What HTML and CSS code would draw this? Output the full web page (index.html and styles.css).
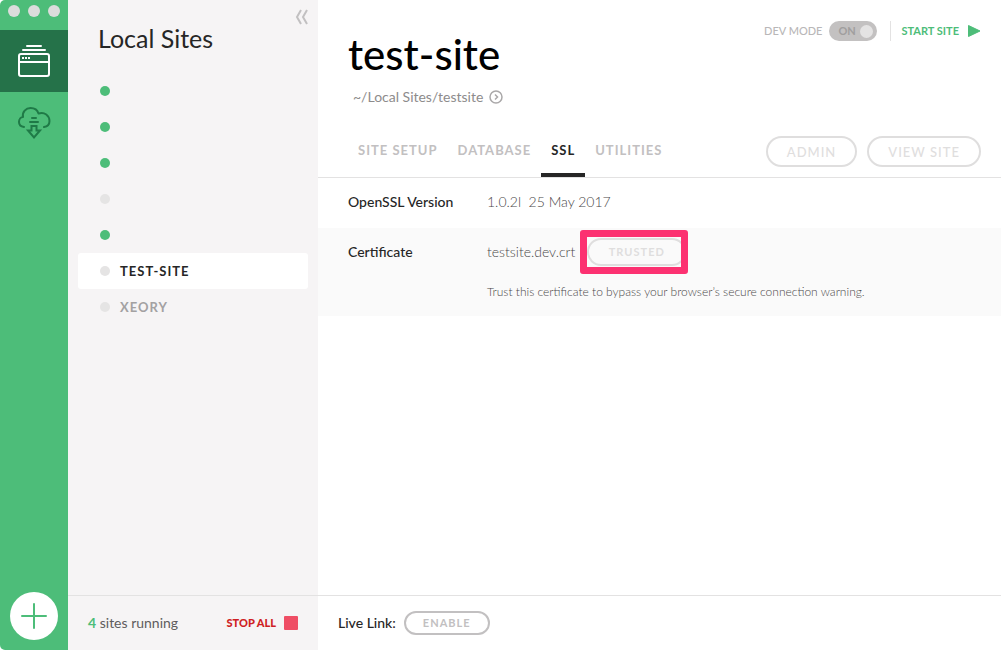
FILE: index.html
```html
<!DOCTYPE html>
<html lang="en">
<head>
<meta charset="utf-8">
<title>Local Sites</title>
<link rel="stylesheet" href="styles.css">
</head>
<body>
<div class="app">
  <nav class="rail" aria-label="Main">
    <div class="window-controls"><span class="light"></span><span class="light"></span><span class="light"></span></div>
    <button class="rail-item rail-item-active" aria-label="Local sites">
      <svg width="34" height="34" viewBox="0 0 34 34" fill="none" stroke="#fff" stroke-width="2" stroke-linecap="round">
        <path d="M10 2h14M6 6h22"/><rect x="2" y="10" width="30" height="22" rx="2"/><path d="M2 18h30"/>
        <path d="M5 14h2M8 14h2M11 14h2" stroke-linecap="butt"/>
      </svg>
    </button>
    <button class="rail-item" aria-label="Downloads">
      <svg width="34" height="34" viewBox="0 0 34 34" fill="none" stroke="#1f7a47" stroke-width="2" stroke-linecap="round" stroke-linejoin="round">
        <path d="M7 21C3 20.500 2 18 2 16c0-3 2-5 4-5C5 6 9 2 13.500 2c4 0 7 2 8 5.500 6-2 11 2 11 7.500 0 3-2 5.500-5.500 6"/>
        <path d="M15 12h4M13 16h8"/><path d="M14.500 20v4.500H11l6 7 6-7h-3.500V20z" stroke-linejoin="miter"/>
      </svg>
    </button>
    <button class="add" aria-label="Add site">
      <svg width="26" height="26" viewBox="0 0 26 26" stroke="#4dbd79" stroke-width="2" stroke-linecap="round"><path d="M13 1v24M1 13h24"/></svg>
    </button>
  </nav>

  <aside class="sidebar">
    <div class="sidebar-head">
      <h2 class="sidebar-title">Local Sites</h2>
      <button class="collapse" aria-label="Collapse">
        <svg width="13" height="16" viewBox="0 0 13 16" fill="none" stroke="#c2c0c1" stroke-width="2"><path d="M6 1L2 8l4 7M12 1L8 8l4 7"/></svg>
      </button>
    </div>
    <ul class="sites">
      <li class="site"><span class="dot dot-on"></span></li>
      <li class="site"><span class="dot dot-on"></span></li>
      <li class="site"><span class="dot dot-on"></span></li>
      <li class="site"><span class="dot"></span></li>
      <li class="site"><span class="dot dot-on"></span></li>
      <li class="site site-active"><span class="dot"></span><a class="site-link" href="#">TEST-SITE</a></li>
      <li class="site"><span class="dot"></span><a class="site-link" href="#">XEORY</a></li>
    </ul>
    <footer class="sidebar-foot">
      <span class="running"><b class="count">4</b> sites running</span>
      <button class="stop">STOP ALL<span class="stop-icon"></span></button>
    </footer>
  </aside>

  <main class="main">
    <header class="head">
      <div class="heading">
        <h1 class="title">test-site</h1>
        <a class="path" href="#">~/Local Sites/testsite
          <svg width="14" height="14" viewBox="0 0 14 14" fill="none" stroke="#aaa8a9" stroke-width="1.500"><circle cx="7" cy="7" r="6"/><path d="M6 4.500L8.500 7 6 9.500"/></svg>
        </a>
      </div>
      <div class="controls">
        <label class="dev-label" for="dev">DEV MODE</label>
        <button class="switch" id="dev" role="switch" aria-checked="true">ON<span class="knob"></span></button>
        <button class="start">START SITE
          <svg width="14" height="14" viewBox="0 0 14 14" fill="#4dbd79" stroke="#4dbd79" stroke-linejoin="round"><path d="M1.500 1.500v11L13 7z"/></svg>
        </button>
      </div>
    </header>
    <div class="bar">
      <nav class="tabs" aria-label="Site">
        <a class="tab" href="#">SITE SETUP</a>
        <a class="tab" href="#">DATABASE</a>
        <a class="tab tab-active" href="#">SSL</a>
        <a class="tab" href="#">UTILITIES</a>
      </nav>
      <div class="actions">
        <button class="pill pill-large">ADMIN</button>
        <button class="pill pill-large">VIEW SITE</button>
      </div>
    </div>
    <dl class="details">
      <div class="row">
        <dt class="term">OpenSSL Version</dt>
        <dd class="value">1.0.2l&nbsp; 25 May 2017</dd>
      </div>
      <div class="row row-shaded">
        <dt class="term">Certificate</dt>
        <dd class="value">
          <div class="cert">testsite.dev.crt <span class="highlight"><button class="pill pill-trusted">TRUSTED</button></span></div>
          <p class="note">Trust this certificate to bypass your browser’s secure connection warning.</p>
        </dd>
      </div>
    </dl>
    <footer class="main-foot">
      <span class="live">Live Link:</span>
      <button class="pill pill-enable">ENABLE</button>
    </footer>
  </main>
</div>
</body>
</html>
```
FILE: styles.css
```css
* { box-sizing: border-box; }

body {
  margin: 0;
  background: #fff;
  color: #262626;
  font: 14px/20px Lato, "Open Sans", sans-serif;
}

button {
  margin: 0;
  padding: 0;
  border: 0;
  background: none;
  color: inherit;
  font: inherit;
  cursor: pointer;
}

a { color: inherit; text-decoration: none; }
h1, h2, p, ul, dl, dd { margin: 0; padding: 0; }
svg { display: block; flex: none; }

.app {
  display: grid;
  grid-template-columns: 68px 250px 1fr;
  min-height: 100vh;
}

.rail {
  display: flex;
  flex-direction: column;
  align-items: center;
  padding-bottom: 10px;
  background: #4dbd79;
  border-radius: 5px 0 0 5px;
}

.window-controls {
  display: flex;
  gap: 8px;
  height: 30px;
  padding-top: 5px;
}

.light {
  width: 12px;
  height: 12px;
  border-radius: 50%;
  background: #dcdcdc;
}

.rail-item {
  display: grid;
  place-items: center;
  width: 100%;
  height: 62px;
}

.rail-item-active { background: #257249; }

.add {
  display: grid;
  place-items: center;
  width: 48px;
  height: 48px;
  margin-top: auto;
  border-radius: 50%;
  background: #fff;
}

.sidebar {
  display: flex;
  flex-direction: column;
  background: #f6f4f5;
}

.sidebar-head {
  display: flex;
  justify-content: space-between;
  align-items: flex-start;
  padding: 9px 10px 20px 30px;
}

.sidebar-title {
  padding-top: 14px;
  font-size: 25px;
  font-weight: 400;
  line-height: 30px;
}

.sites { padding: 0 10px; list-style: none; }

.site {
  display: flex;
  align-items: center;
  gap: 10px;
  height: 36px;
  padding-left: 22px;
  border-radius: 3px;
  color: #a3a1a2;
  font-size: 13px;
  font-weight: 700;
  letter-spacing: 1px;
}

.site-active { background: #fff; color: #262626; }

.dot {
  width: 10px;
  height: 10px;
  border-radius: 50%;
  background: #e5e4e4;
}

.dot-on { background: #4dbd79; }

.sidebar-foot,
.main-foot {
  display: flex;
  align-items: center;
  height: 55px;
  margin-top: auto;
  padding: 0 20px;
  border-top: 1px solid #e3e2e2;
}

.sidebar-foot { justify-content: space-between; color: #5e5c5d; }
.count { color: #4dbd79; }

.stop {
  display: flex;
  align-items: center;
  gap: 8px;
  color: #cf1f24;
  font-size: 11px;
  font-weight: 900;
}

.stop-icon {
  width: 14px;
  height: 14px;
  border-radius: 1px;
  background: #ef4e65;
}

.main { display: flex; flex-direction: column; min-width: 0; }

.head {
  display: flex;
  justify-content: space-between;
  align-items: flex-start;
  padding: 21px 20px 17px 30px;
}

.title {
  padding-top: 9px;
  color: #000;
  font-size: 42px;
  font-weight: 500;
  line-height: 48px;
}

.path {
  display: flex;
  align-items: center;
  gap: 6px;
  padding: 9px 0 0 5px;
  color: #8d8b8c;
}

.controls {
  display: flex;
  align-items: center;
  color: #b9b7b8;
  font-size: 11px;
}

.dev-label { font-weight: 500; }

.switch {
  display: flex;
  align-items: center;
  justify-content: space-between;
  width: 48px;
  height: 20px;
  margin: 0 13px 0 7px;
  padding: 0 4px 0 9px;
  border-radius: 10px;
  background: #c3c1c1;
  color: #a09e9e;
  font-weight: 700;
}

.knob {
  width: 13px;
  height: 13px;
  border-radius: 50%;
  background: #e4e3e3;
}

.start {
  display: flex;
  align-items: center;
  gap: 8px;
  padding-left: 10px;
  border-left: 1px solid #e3e2e2;
  color: #4dbd79;
  font-weight: 700;
}

.bar {
  display: flex;
  justify-content: space-between;
  align-items: flex-end;
  padding: 0 20px 0 30px;
  border-bottom: 1px solid #e3e2e2;
}

.tabs { display: flex; }

.tab {
  padding: 16px 10px 13px;
  border-bottom: 4px solid transparent;
  color: #c2c0c1;
  font-size: 13px;
  font-weight: 700;
  letter-spacing: 1px;
}

.tab-active { border-color: #262626; color: #262626; }
.actions { display: flex; gap: 10px; padding-bottom: 10px; }

.pill {
  border: 2px solid #dfdede;
  border-radius: 16px;
  color: #dfdede;
  font-weight: 500;
  letter-spacing: 1px;
}

.pill-large {
  height: 31px;
  padding: 0 19px;
  font-size: 13px;
}

.pill-trusted {
  width: 99px;
  height: 28px;
  font-size: 11px;
  font-weight: 700;
}

.pill-enable {
  height: 24px;
  padding: 0 17px;
  border-color: #c2c0c1;
  color: #c2c0c1;
  font-size: 11px;
  font-weight: 700;
  line-height: 18px;
}

.row {
  display: grid;
  grid-template-columns: 139px 1fr;
  padding: 14px 30px 16px;
}

.term, .live { font-weight: 500; }
.value { color: #4a4849; font-weight: 300; }
.row-shaded { padding-bottom: 15px; background: #fafafa; }
.cert { display: flex; align-items: center; gap: 5px; height: 20px; }

.highlight {
  display: grid;
  place-items: center;
  width: 108px;
  height: 44px;
  border: 7px solid #fc3171;
  border-radius: 3px;
  overflow: hidden;
}

.note { padding-top: 21px; font-size: 12px; line-height: 18px; }
.main-foot { gap: 8px; }
```
